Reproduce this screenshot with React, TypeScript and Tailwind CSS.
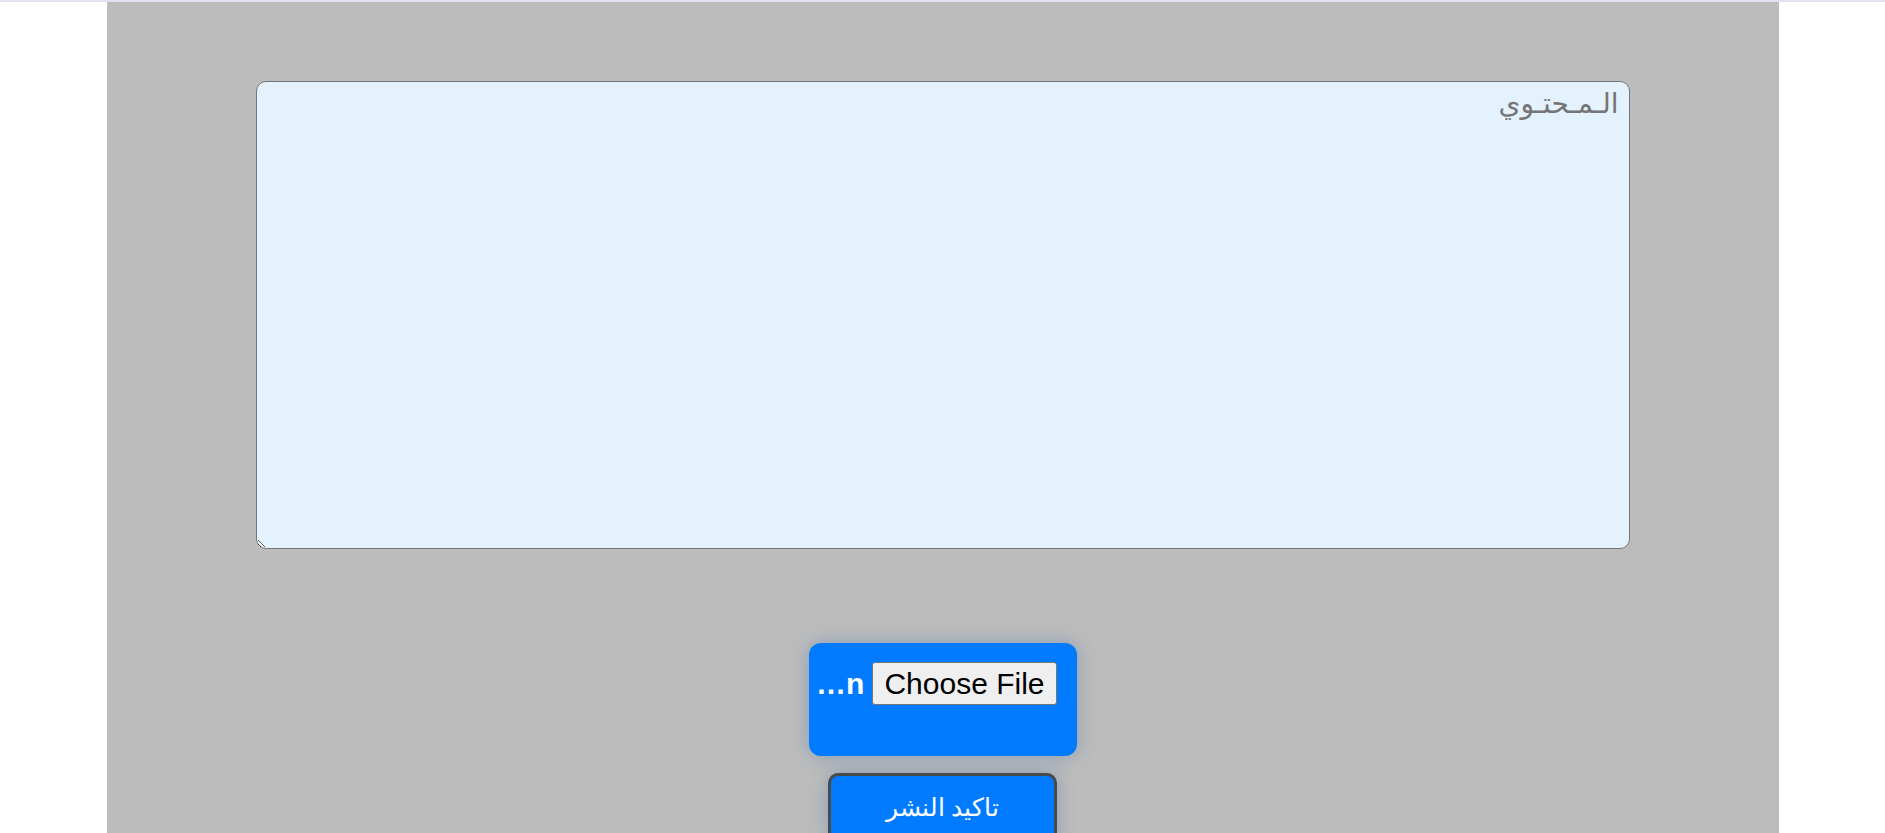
export default function App() {
  return (
    <div className="min-h-screen bg-white">
      {/* thin top strip */}
      <div className="h-[2px] bg-[#dfe1ef]" />

      <div className="mx-auto w-[1672px] min-h-[831px] bg-[#bcbcbc] flex flex-col items-center pt-[79px]">
        <textarea
          dir="rtl"
          placeholder="الـمـحتـوي"
          className="block w-[1374px] h-[468px] bg-[#e3f2fd] border border-[#767676] rounded-[10px] px-[10px] py-[2px] text-[28px] leading-[40px] text-black placeholder:text-[#757575] font-['DejaVu_Sans',sans-serif] outline-none"
        />

        {/* file picker */}
        <div className="mt-[94px] w-[268px] h-[113px] bg-[#007bff] rounded-[12px] shadow-[0_0_18px_rgba(40,100,170,0.35)] pt-[19px] pr-[20px] pl-[7px]">
          <input
            type="file"
            dir="rtl"
            className="block w-full text-[30px] leading-[43px] font-bold text-white font-['Liberation_Sans',Arial,sans-serif] file:text-black file:font-normal file:text-[30px] file:leading-[35px] file:bg-[#efefef] file:border file:border-[#767676] file:rounded-[3px] file:px-[11px] file:py-[3px] file:ml-[8px]"
          />
        </div>

        {/* submit */}
        <button
          type="button"
          className="mt-[17px] w-[229px] h-[70px] bg-[#007bff] text-white text-[25px] border-[3px] border-[#4a4a4a] rounded-[10px] shadow-[0_0_18px_rgba(40,100,170,0.35)] font-['Liberation_Sans',Arial,sans-serif]"
        >
          تاكيد النشر
        </button>
      </div>
    </div>
  );
}
